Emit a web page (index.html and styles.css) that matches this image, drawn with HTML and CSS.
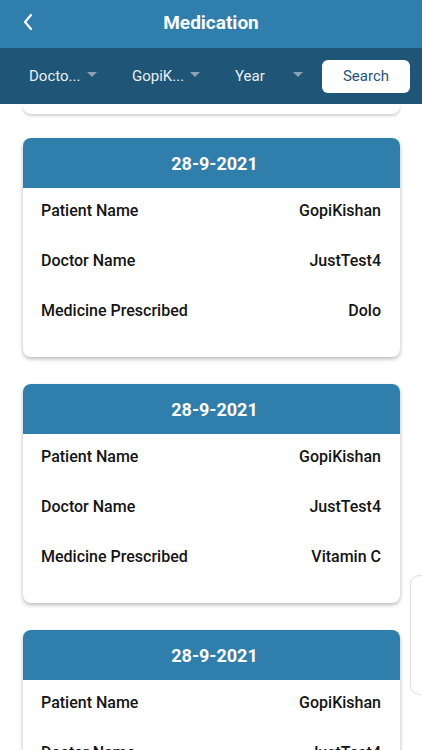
FILE: index.html
```html
<!DOCTYPE html>
<html lang="en">
<head>
    <meta charset="UTF-8">
    <title>Medication</title>
    <link rel="stylesheet" href="styles.css">
</head>
<body>
<div class="app">
    <div class="topbar">
        <svg class="back" width="12" height="18" viewBox="0 0 12 18">
            <path d="M9 2 L3 9 L9 16" fill="none" stroke="#fff" stroke-width="2.2" stroke-linecap="round" stroke-linejoin="round"/>
        </svg>
        <div class="title">Medication</div>
    </div>
    <div class="filters">
        <div class="drop"><span>Docto...</span><i class="caret"></i></div>
        <div class="drop"><span>GopiK...</span><i class="caret"></i></div>
        <div class="drop"><span>Year</span><i class="caret"></i></div>
        <div class="search">Search</div>
    </div>
    <div class="list">
        <div class="tail"></div>

        <div class="card">
            <div class="card-head">28-9-2021</div>
            <div class="card-body">
                <div class="row"><span>Patient Name</span><span>GopiKishan</span></div>
                <div class="row"><span>Doctor Name</span><span>JustTest4</span></div>
                <div class="row"><span>Medicine Prescribed</span><span>Dolo</span></div>
            </div>
        </div>

        <div class="card">
            <div class="card-head">28-9-2021</div>
            <div class="card-body">
                <div class="row"><span>Patient Name</span><span>GopiKishan</span></div>
                <div class="row"><span>Doctor Name</span><span>JustTest4</span></div>
                <div class="row"><span>Medicine Prescribed</span><span>Vitamin C</span></div>
            </div>
        </div>

        <div class="card">
            <div class="card-head">28-9-2021</div>
            <div class="card-body">
                <div class="row"><span>Patient Name</span><span>GopiKishan</span></div>
                <div class="row"><span>Doctor Name</span><span>JustTest4</span></div>
                <div class="row"><span>Medicine Prescribed</span><span>Dolo</span></div>
            </div>
        </div>
    </div>
    <div class="side-tab"></div>
</div>
</body>
</html>
```

FILE: styles.css
```css
*{
    margin: 0;
    padding: 0;
    box-sizing: border-box;
}
body{
    font-family: Roboto, "Liberation Sans", sans-serif;
    background-color: #fff;
}
.app{
    position: relative;
    width: 422px;
    height: 750px;
    overflow: hidden;
}
.topbar{
    position: relative;
    height: 48px;
    background-color: #2f7eab;
    display: flex;
    align-items: center;
    justify-content: center;
}
.back{
    position: absolute;
    left: 22px;
    top: 13px;
}
.title{
    color: #fff;
    font-size: 19px;
    font-weight: 700;
    margin-top: -4px;
}
.filters{
    height: 56px;
    background-color: #1f5576;
    display: flex;
    align-items: center;
    padding-left: 29px;
}
.drop{
    width: 68px;
    margin-right: 35px;
    display: flex;
    align-items: center;
    justify-content: space-between;
    color: #e9eff3;
    font-size: 15px;
}
.drop:nth-child(3){
    margin-right: 19px;
}
.caret{
    width: 0;
    height: 0;
    border-left: 5px solid transparent;
    border-right: 5px solid transparent;
    border-top: 5px solid #8aa3b3;
    margin-top: -3px;
}
.search{
    width: 88px;
    height: 33px;
    background-color: #fff;
    border-radius: 6px;
    color: #1f5576;
    font-size: 15px;
    display: flex;
    align-items: center;
    justify-content: center;
}
.list{
    padding-left: 23px;
}
.tail{
    width: 377px;
    height: 10px;
    border-radius: 0 0 8px 8px;
    background-color: #fff;
    box-shadow: 0 2px 3px rgba(0,0,0,0.18);
    margin-bottom: 24px;
}
.card{
    width: 377px;
    border-radius: 8px;
    background-color: #fff;
    box-shadow: 0 2px 4px rgba(0,0,0,0.28);
    margin-bottom: 27px;
    overflow: hidden;
}
.card-head{
    height: 50px;
    background-color: #2f7eab;
    color: #fff;
    font-size: 18px;
    font-weight: 700;
    display: flex;
    align-items: center;
    justify-content: center;
    padding-left: 6px;
}
.card-body{
    padding: 10px 19px 35px 18px;
    display: flex;
    flex-direction: column;
    gap: 26px;
}
.row{
    height: 24px;
    display: flex;
    align-items: center;
    justify-content: space-between;
    font-size: 16px;
    font-weight: 500;
    color: #141414;
}
.side-tab{
    position: absolute;
    left: 410px;
    top: 575px;
    width: 40px;
    height: 120px;
    border: 1px solid #e2e2e2;
    border-radius: 10px;
    background-color: #fff;
    box-shadow: 0 0 3px rgba(0,0,0,0.08);
}
```
